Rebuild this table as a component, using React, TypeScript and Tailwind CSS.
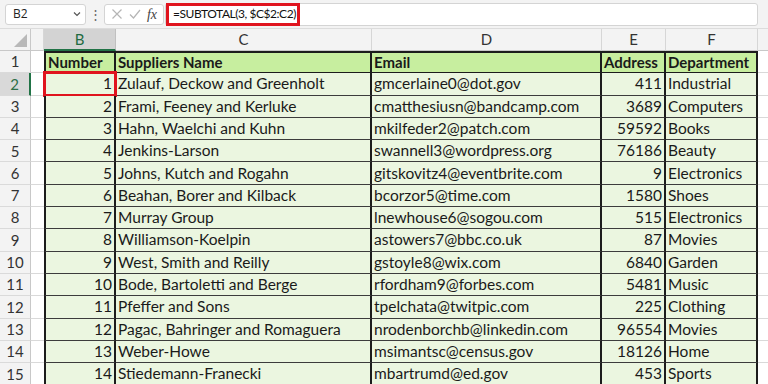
import React from "react";

const rows: [number, string, string, number, string][] = [
  [1, "Zulauf, Deckow and Greenholt", "gmcerlaine0@dot.gov", 411, "Industrial"],
  [2, "Frami, Feeney and Kerluke", "cmatthesiusn@bandcamp.com", 3689, "Computers"],
  [3, "Hahn, Waelchi and Kuhn", "mkilfeder2@patch.com", 59592, "Books"],
  [4, "Jenkins-Larson", "swannell3@wordpress.org", 76186, "Beauty"],
  [5, "Johns, Kutch and Rogahn", "gitskovitz4@eventbrite.com", 9, "Electronics"],
  [6, "Beahan, Borer and Kilback", "bcorzor5@time.com", 1580, "Shoes"],
  [7, "Murray Group", "lnewhouse6@sogou.com", 515, "Electronics"],
  [8, "Williamson-Koelpin", "astowers7@bbc.co.uk", 87, "Movies"],
  [9, "West, Smith and Reilly", "gstoyle8@wix.com", 6840, "Garden"],
  [10, "Bode, Bartoletti and Berge", "rfordham9@forbes.com", 5481, "Music"],
  [11, "Pfeffer and Sons", "tpelchata@twitpic.com", 225, "Clothing"],
  [12, "Pagac, Bahringer and Romaguera", "nrodenborchb@linkedin.com", 96554, "Movies"],
  [13, "Weber-Howe", "msimantsc@census.gov", 18126, "Home"],
  [14, "Stiedemann-Franecki", "mbartrumd@ed.gov", 453, "Sports"],
];

const font = { fontFamily: "Lato, 'Open Sans', sans-serif" };

function ColHead({ w, label, sel }: { w: string; label: string; sel?: boolean }) {
  return (
    <div
      className={`${w} h-full flex items-center justify-center text-[15px] border-r ${
        sel
          ? "bg-[#d3d3d3] text-[#1e6b41] border-r-[#c0c0c0] border-b-2 border-b-[#217346]"
          : "bg-[#f3f3f3] text-[#333] border-r-[#d6d6d6] border-b border-b-[#c8c8c8]"
      }`}
    >
      {label}
    </div>
  );
}

export default function App() {
  return (
    <div className="w-[768px] h-[384px] overflow-hidden bg-white text-[#1a1a1a]" style={font}>
      {/* Formula bar */}
      <div className="h-[29px] bg-[#f3f3f3] flex items-center pl-[5px] pr-[10px] border-b border-[#dcdcdc]">
        <div className="w-[81px] h-[21px] bg-white border border-[#d4d4d4] rounded-[3px] flex items-center justify-between pl-[7px] pr-[3px] text-[12px] text-[#222]" style={{ fontFamily: "'Open Sans', sans-serif" }}>
          <span>B2</span>
          <svg width="10" height="10" viewBox="0 0 10 10" fill="none" stroke="#555" strokeWidth="1.2">
            <path d="M2 3.5 L5 6.5 L8 3.5" />
          </svg>
        </div>
        <div className="w-[18px] flex justify-center text-[#666] text-[13px] leading-none">⋮</div>
        <div className="w-[60px] h-[21px] bg-white border border-[#d4d4d4] rounded-[3px] flex items-center justify-around px-[3px]">
          <svg width="12" height="12" viewBox="0 0 12 12" stroke="#b5b5b5" strokeWidth="1.2" fill="none">
            <path d="M1.5 1.5 L10.5 10.5 M10.5 1.5 L1.5 10.5" />
          </svg>
          <svg width="12" height="12" viewBox="0 0 12 12" stroke="#b5b5b5" strokeWidth="1.2" fill="none">
            <path d="M1 6.5 L4.5 10 L11 2" />
          </svg>
          <span className="italic text-[14px] text-[#444]" style={{ fontFamily: "'Liberation Serif', serif" }}>
            fx
          </span>
        </div>
        <div className="flex-1 ml-[1px] h-[23px] bg-white border border-[#d4d4d4] rounded-[3px] flex items-center">
          <div className="h-[23px] w-[134px] border-[3px] border-[#e0141e] flex items-center pl-[4px] text-[12px] tracking-[-0.45px] text-[#111] whitespace-nowrap" style={{ fontFamily: "Lato, sans-serif" }}>
            =SUBTOTAL(3, $C$2:C2)
          </div>
        </div>
      </div>

      {/* Column headers */}
      <div className="h-[22px] flex">
        <div className="w-[31px] h-full bg-[#f3f3f3] border-r border-b border-[#c8c8c8] flex items-end justify-end pr-[3px] pb-[3px]">
          <svg width="13" height="13" viewBox="0 0 13 13">
            <path d="M13 0 L13 13 L0 13 Z" fill="#b8b8b8" />
          </svg>
        </div>
        <ColHead w="w-[13px]" label="" />
        <ColHead w="w-[72px]" label="B" sel />
        <ColHead w="w-[256px]" label="C" />
        <ColHead w="w-[230px]" label="D" />
        <ColHead w="w-[64px]" label="E" />
        <ColHead w="w-[92px]" label="F" />
        <div className="flex-1 h-full bg-[#f3f3f3] border-b border-[#c8c8c8]" />
      </div>

      {/* Row 1: headers */}
      <div className="h-[22.3px] flex text-[15px]">
        <div className="w-[31px] h-full bg-[#f3f3f3] border-r border-[#c8c8c8] border-b border-b-[#dadada] flex items-center justify-center text-[#333]">
          1
        </div>
        <div className="w-[13px] h-full border-b border-[#d9d9d9]" />
        <div className="w-[72px] h-full bg-[#c7ee9f] border-x-2 border-[#1c1c1c] border-t-2 border-b flex items-center pl-[2px] font-bold">Number</div>
        <div className="w-[256px] h-full bg-[#c7ee9f] border-r-2 border-[#1c1c1c] border-t-2 border-b flex items-center pl-[2px] font-bold">Suppliers Name</div>
        <div className="w-[230px] h-full bg-[#c7ee9f] border-r-2 border-[#1c1c1c] border-t-2 border-b flex items-center pl-[2px] font-bold">Email</div>
        <div className="w-[64px] h-full bg-[#c7ee9f] border-r-2 border-[#1c1c1c] border-t-2 border-b flex items-center pl-[2px] font-bold">Address</div>
        <div className="w-[92px] h-full bg-[#c7ee9f] border-r-2 border-[#1c1c1c] border-t-2 border-b flex items-center pl-[2px] font-bold">Department</div>
        <div className="flex-1 h-full border-b border-[#d9d9d9]" />
      </div>

      {rows.map(([n, name, email, addr, dept], i) => {
        const sel = i === 0;
        return (
          <div key={n} className="h-[22.3px] flex text-[15.5px]">
            <div
              className={`w-[31px] h-full border-b border-b-[#dadada] flex items-center justify-center text-[15px] ${
                sel ? "bg-[#d9d9d9] text-[#2f6f48] border-r-2 border-r-[#217346]" : "bg-[#f3f3f3] text-[#333] border-r border-r-[#c8c8c8]"
              }`}
            >
              {n + 1}
            </div>
            <div className="w-[13px] h-full border-b border-[#d9d9d9]" />
            <div className="relative w-[72px] h-full bg-[#ebf6e0] border-x-2 border-[#1c1c1c] border-b border-b-[#3c3c3c] flex items-center justify-end pr-[2px]">
              {n}
              {sel && <div className="absolute -left-[3px] -right-[3px] -top-[2px] -bottom-[2px] border-[3px] border-[#e0141e]" />}
            </div>
            <div className="w-[256px] h-full bg-[#ebf6e0] border-r-2 border-[#1c1c1c] border-b border-b-[#3c3c3c] flex items-center pl-[2px] whitespace-nowrap overflow-hidden">{name}</div>
            <div className="w-[230px] h-full bg-[#ebf6e0] border-r-2 border-[#1c1c1c] border-b border-b-[#3c3c3c] flex items-center pl-[2px] whitespace-nowrap overflow-hidden">{email}</div>
            <div className="w-[64px] h-full bg-[#ebf6e0] border-r-2 border-[#1c1c1c] border-b border-b-[#3c3c3c] flex items-center justify-end pr-[2px]">{addr}</div>
            <div className="w-[92px] h-full bg-[#ebf6e0] border-r-2 border-[#1c1c1c] border-b border-b-[#3c3c3c] flex items-center pl-[2px] whitespace-nowrap overflow-hidden">{dept}</div>
            <div className="flex-1 h-full border-b border-[#d9d9d9]" />
          </div>
        );
      })}
    </div>
  );
}
